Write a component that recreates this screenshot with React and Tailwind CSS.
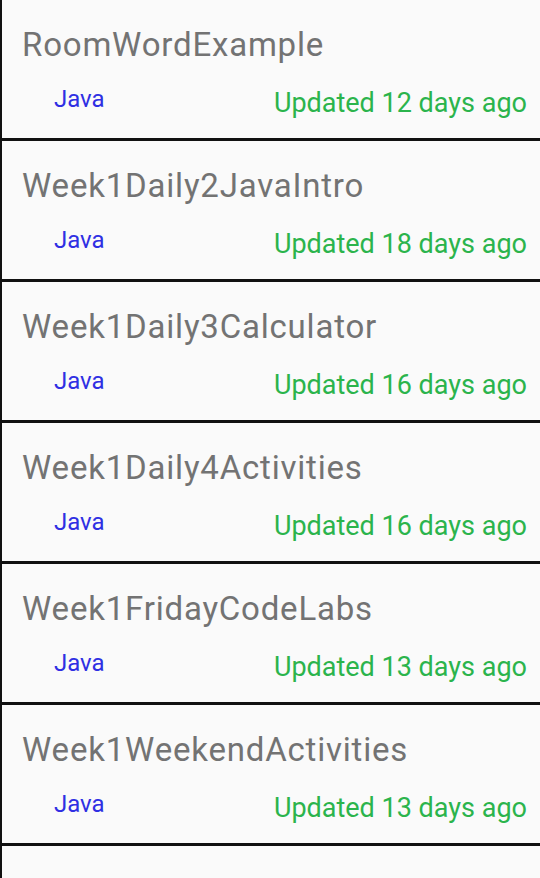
import React from "react";

const items = [
  ["RoomWordExample", "12"],
  ["Week1Daily2JavaIntro", "18"],
  ["Week1Daily3Calculator", "16"],
  ["Week1Daily4Activities", "16"],
  ["Week1FridayCodeLabs", "13"],
  ["Week1WeekendActivities", "13"],
  ["", ""],
];

export default function App() {
  return (
    <div className="w-[540px] h-[878px] overflow-hidden bg-[#fafafa] border-l-2 border-[#111]" style={{ fontFamily: "Roboto, sans-serif" }}>
      {items.map(([name, days], i) => (
        <div key={i} className="h-[141px] border-b-[3px] border-[#111] flex flex-col">
          {name && (
            <>
              <div className="pl-5 pt-[27px] text-[33px] leading-[36px] tracking-[0.8px] text-[#737373]">{name}</div>
              <div className="flex items-start justify-between pl-[52px] pr-[13px]">
                <span className="mt-[22px] text-[24px] leading-[28px] text-[#2f2fe3]">Java</span>
                <span className="mt-[24px] text-[27px] leading-[32px] text-[#2bb44c]">Updated {days} days ago</span>
              </div>
            </>
          )}
        </div>
      ))}
    </div>
  );
}
